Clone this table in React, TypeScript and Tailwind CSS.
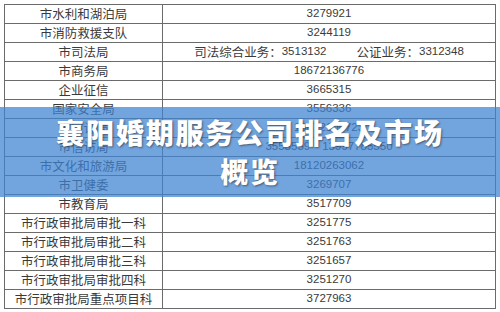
import React from "react";

type Row = { name: string; value: React.ReactNode };

const rows: Row[] = [
  { name: "市水利和湖泊局", value: "3279921" },
  { name: "市消防救援支队", value: "3244119" },
  {
    name: "市司法局",
    value: (
      <span className="flex items-center">
        <span className="text-[12.5px] font-['Noto_Sans_CJK_SC',sans-serif]">司法综合业务：</span>
        <span>3513132</span>
        <span className="inline-block w-[30px]" />
        <span className="text-[12.5px] font-['Noto_Sans_CJK_SC',sans-serif]">公证业务：</span>
        <span>3312348</span>
      </span>
    ),
  },
  { name: "市商务局", value: "18672136776" },
  { name: "企业征信", value: "3665315" },
  { name: "国家安全局", value: "3556336" },
  { name: "市审计局", value: "18672106723" },
  {
    name: "市信访局",
    value: (
      <span>
        3553559<span className="inline-block w-[12px]" />13997785550
      </span>
    ),
  },
  { name: "市文化和旅游局", value: "18120263062" },
  { name: "市卫健委", value: "3269707" },
  { name: "市教育局", value: "3517709" },
  { name: "市行政审批局审批一科", value: "3251775" },
  { name: "市行政审批局审批二科", value: "3251763" },
  { name: "市行政审批局审批三科", value: "3251657" },
  { name: "市行政审批局审批四科", value: "3251270" },
  { name: "市行政审批局重点项目科", value: "3727963" },
];

export default function App() {
  return (
    <div className="relative w-[500px] h-[312px] bg-white overflow-hidden">
      <div className="pt-[4px] pl-[4px]">
        <div className="w-[492px] border-l border-t border-[#6b6b6b]">
          {rows.map((r, i) => (
            <div key={i} className="flex h-[19px]">
              <div className="w-[158px] shrink-0 border-r border-b border-[#6b6b6b] flex items-center justify-center text-[12.5px] leading-none text-[#3a3a3a] font-['Noto_Sans_CJK_SC',sans-serif] whitespace-nowrap">
                {r.name}
              </div>
              <div className="flex-1 border-r border-b border-[#6b6b6b] flex items-center justify-center text-[11.5px] leading-none text-[#3a3a3a] font-['Liberation_Sans','Noto_Sans_CJK_SC',sans-serif] whitespace-nowrap">
                {r.value}
              </div>
            </div>
          ))}
        </div>
      </div>

      <div className="absolute left-0 right-0 top-[107px] h-[90px] bg-[rgba(62,130,210,0.73)] flex flex-col items-center justify-center">
        <div className="text-white text-[28px] leading-[39px] font-black tracking-[1.8px] text-center font-['Noto_Sans_CJK_SC',sans-serif] [text-shadow:1px_1px_2px_rgba(40,40,40,0.6)]">
          襄阳婚期服务公司排名及市场
          <br />
          概览
        </div>
      </div>
    </div>
  );
}
